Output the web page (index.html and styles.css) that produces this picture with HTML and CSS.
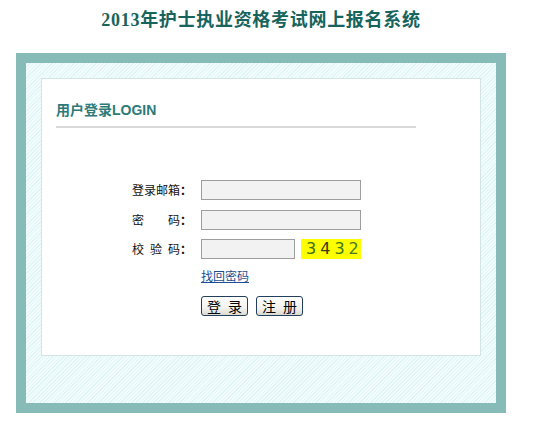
FILE: index.html
```html
<!DOCTYPE html>
<html lang="zh-CN">
<head>
<meta charset="utf-8">
<title>2013年护士执业资格考试网上报名系统</title>
<link rel="stylesheet" href="styles.css">
</head>
<body>
<div class="wrap">
  <h1 class="title">2013年护士执业资格考试网上报名系统</h1>
  <div class="frame">
    <div class="hatch">
      <div class="panel">
        <h2 class="heading">用户登录LOGIN</h2>
        <form class="form">
          <div class="row">
            <label class="lbl">登录邮箱<span class="colon">：</span></label>
            <input class="inp" type="text">
          </div>
          <div class="row">
            <label class="lbl">密　　码<span class="colon">：</span></label>
            <input class="inp" type="password">
          </div>
          <div class="row">
            <label class="lbl">校&ensp;验&ensp;码<span class="colon">：</span></label>
            <input class="inp inp-short" type="text">
            <span class="captcha"><span class="dg c1">3</span><span class="dg c2">4</span><span class="dg c3">3</span><span class="dg c4">2</span></span>
          </div>
          <div class="row row-link">
            <span class="lbl"></span>
            <a class="link" href="#">找回密码</a>
          </div>
          <div class="row row-btns">
            <span class="lbl"></span>
            <button class="btn" type="button">登&ensp;录</button>
            <button class="btn" type="button">注&ensp;册</button>
          </div>
        </form>
      </div>
    </div>
  </div>
</div>
</body>
</html>
```

FILE: styles.css
```css
html, body {
  margin: 0;
  padding: 0;
  background: #ffffff;
}
body {
  font-family: "Noto Sans CJK SC", "Liberation Sans", sans-serif;
  font-size: 12px;
  color: #000;
}
.wrap {
  width: 490px;
  margin-left: 16px;
}
.title {
  margin: 0 0 21px 0;
  padding-top: 8px;
  height: 24px;
  line-height: 24px;
  font-family: "Liberation Serif", "Noto Sans CJK SC", serif;
  font-size: 18px;
  font-weight: bold;
  letter-spacing: 0.7px;
  text-align: center;
  color: #17645d;
}
.frame {
  background: #87bbb8;
  padding: 10px;
}
.hatch {
  height: 340px;
  box-sizing: border-box;
  padding: 15px 15px 0 15px;
  background: repeating-linear-gradient(135deg, #e0f5f5 0px, #e0f5f5 1px, #f3fcfc 1px, #f3fcfc 2.6px);
}
.panel {
  background: #fff;
  border: 1px solid #d3e5e3;
  padding: 21px 14px 0 14px;
  height: 255px;
}
.heading {
  margin: 0;
  width: 360px;
  height: 20px;
  line-height: 20px;
  padding-bottom: 6px;
  border-bottom: 2px solid #d9d9d9;
  font-family: "Liberation Sans", "Noto Sans CJK SC", sans-serif;
  font-size: 14px;
  font-weight: bold;
  color: #2d7a78;
}
.form {
  margin: 52px 0 0 76px;
}
.row {
  display: flex;
  align-items: center;
  height: 20px;
  margin-bottom: 10px;
}
.row:nth-child(2) {
  margin-bottom: 9px;
}
.row:nth-child(3) {
  margin-bottom: 7px;
}
.lbl {
  width: 60px;
  margin-right: 9px;
  text-align: right;
  font-size: 12px;
  line-height: 20px;
  white-space: pre;
  color: #111;
}
.colon {
  font-family: "Noto Sans CJK JP", sans-serif;
  font-weight: bold;
}
.inp {
  width: 160px;
  height: 20px;
  box-sizing: border-box;
  border: 1px solid #9d9d9d;
  background: #f2f2f2;
  margin: 0;
  padding: 0 2px;
}
.inp-short {
  width: 94px;
}
.captcha {
  display: flex;
  align-items: center;
  margin-left: 6px;
  width: 60px;
  height: 20px;
  box-sizing: border-box;
  padding-left: 5px;
  background: #ffff00;
  font-family: "DejaVu Sans", "Liberation Sans", sans-serif;
  font-size: 16px;
  line-height: 20px;
  white-space: nowrap;
}
.dg {
  margin-right: 4px;
}
.dg:last-child {
  margin-right: 0;
}
.c1 { color: #3e6c12; }
.c2 { color: #3b3a0e; }
.c3 { color: #3d7a1c; }
.c4 { color: #4a7a24; }
.link {
  font-size: 12px;
  line-height: 20px;
  color: #1d4e8f;
  text-decoration: underline;
}
.btn {
  width: 47px;
  height: 20px;
  margin: 0 8px 0 0;
  padding: 0;
  box-sizing: border-box;
  border: 1px solid #22405e;
  border-radius: 3px;
  background: linear-gradient(#ffffff, #f4f3ee 60%, #dcdad0);
  font-family: "Noto Sans CJK SC", sans-serif;
  font-size: 14px;
  line-height: 18px;
  white-space: nowrap;
  color: #000;
}
```
